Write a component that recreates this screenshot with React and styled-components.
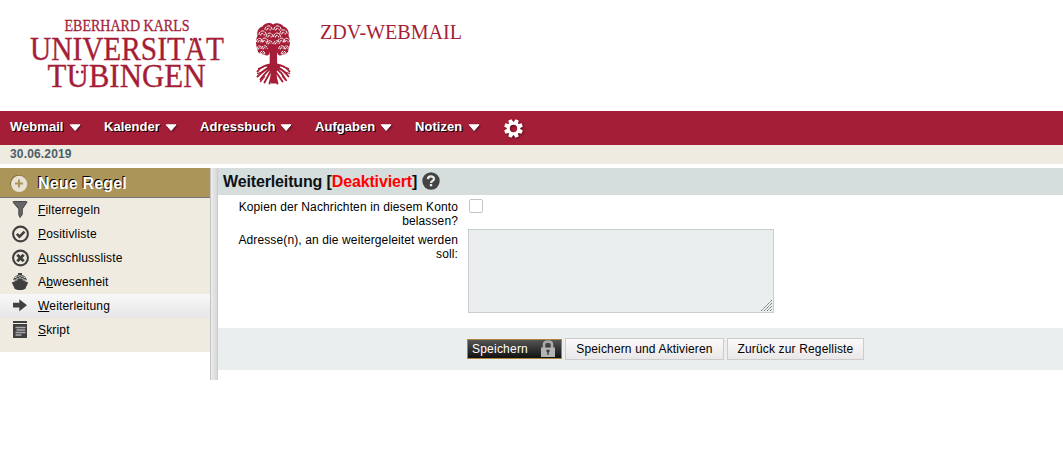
import React from 'react';
import styled, { createGlobalStyle, css } from 'styled-components';

const Global = createGlobalStyle`
  * { box-sizing: border-box; }
  body { margin: 0; background: #fff; color: #000; font: 12px/14px "Liberation Sans", Arial, sans-serif; overflow: hidden; }
`;
const RED = '#a51e37';

const Page = styled.div`display: flex; flex-direction: column; height: 462px;`;
const Banner = styled.header`height: 111px; flex: none; display: flex;`;
const LogoSvg = styled.svg`display: block; fill: ${RED}; font-family: "Liberation Serif", serif;`;

const Nav = styled.nav`height: 34px; flex: none; background: ${RED}; display: flex; padding-left: 10px;`;
const NavItem = styled.div`
  width: ${p => p.$w}px; height: 32px; display: flex; align-items: center; justify-content: space-between; padding-right: 23px;
  color: #fff; font-size: 13px; font-weight: bold; text-shadow: 1px 1px 0 #000; white-space: nowrap; letter-spacing: .04px;
`;
const Icon = styled.svg`display: block; flex: none; overflow: visible; ${p => p.$shadow && css`filter: drop-shadow(1px 1px 1px rgba(0,0,0,.5));`}`;
const GearSlot = styled.div`padding: 8px 0 0 1px;`;
const DateBar = styled.div`height: 19px; flex: none; margin-bottom: 4px; padding: 2px 10px; background: #f0ebe0; color: #4a5f6b; font-weight: bold; letter-spacing: .16px;`;

const Columns = styled.div`display: flex; height: 212px;`;
const Sidebar = styled.aside`width: 210px; height: 184px; flex: none; background: #f0ebe0;`;
const NewRule = styled.div`
  height: 30px; display: flex; align-items: center; padding: 2px 0 0 10px; gap: 10px; background: #ac9558; border-bottom: 1px solid #777;
  color: #fff; font-size: 16px; font-weight: bold; text-shadow: -1px -1px 0 #000; letter-spacing: .18px;
`;
const SideItem = styled.div`
  height: 24px; display: flex; align-items: center; padding-left: 10px; gap: 8px; letter-spacing: .17px;
  background: ${p => (p.$active ? 'linear-gradient(#f8f8f8, #e6e6e6)' : 'none')};
`;
const Splitter = styled.div`width: 8px; flex: none; background: linear-gradient(90deg, #ececec, #d8d8d8); border-left: 1px solid #c4c4c4; border-right: 1px solid #ccc;`;
const Main = styled.main`flex: 1; display: flex; flex-direction: column;`;
const Title = styled.h1`
  margin: 0; height: 27px; padding-left: 5px; display: flex; align-items: center; background: #d6dddd; color: #0c1216;
  font-size: 16px; font-weight: bold; white-space: pre; letter-spacing: -.14px;
`;
const Disabled = styled.span`color: #f00;`;
const HelpSlot = styled.span`margin: -2px 0 0 5px;`;
const Form = styled.div`height: 133px; display: grid; grid-template-columns: 240px 1fr; grid-template-rows: 34px 1fr; column-gap: 10px;`;
const Label = styled.label`padding: ${p => p.$top}px 0 0 10px; text-align: right; letter-spacing: .12px;`;
const Check = styled.span`display: block; width: 14px; height: 14px; margin: 4px 0 0 1px; border: 1px solid #c4c4c4; border-radius: 2px; background: #fff;`;
const Area = styled.div`width: 306px; height: 84px; border: 1px solid #c9cece; background: #eaeeee; display: flex; justify-content: flex-end; align-items: flex-end; padding: 0 1px 1px 0;`;
const Footer = styled.div`height: 42px; display: flex; padding: 10px 0 0 249px; gap: 3px; background: #eaeeee;`;
const Button = styled.button`
  height: 22px; width: ${p => p.$w}px; margin: 0; padding: 0; border: 1px solid #ccc; background: linear-gradient(#fbf9f9, #e9e7e7);
  color: #000; font: 12px/20px "Liberation Sans", Arial, sans-serif; letter-spacing: .15px; white-space: nowrap;
`;
const Primary = styled(Button)`
  height: 20px; margin-top: 1px; padding: 0 5px 1px 4px; display: flex; align-items: center; justify-content: space-between;
  border-color: #ac8640; background: linear-gradient(#555, #111); color: #fff; letter-spacing: .22px;
`;

const curls = [
  [7, 11, 3.6], [13, 6, 3.6], [22, 6, 3.6], [28, 10, 3.6], [31, 18, 3.2], [4, 18, 3], [14, 13, 3.4], [21.5, 13, 3.4],
  [9, 18, 3.4], [14, 20, 2.8], [21, 20, 2.8], [26, 18, 3.4], [31, 25, 2.6], [4, 25, 2.6], [9, 25, 2.8], [26, 25, 2.8], [7, 30, 2.4], [28, 30, 2.4],
];
const Tree = () => (
  <g transform="translate(255.5 22.5)" fill="none" stroke={RED} strokeLinecap="round">
    <path fill={RED} stroke="none" d="M17.5 2C14-.5 9 .5 7 4 3 5 1 9 2 13 0 17 0 23 2 27c0 4 4 5 7 5 2 2 4 1 5-1l1-4h6l1 4c1 2 3 3 5 1 4 0 6-2 6-6 2-4 2-9 0-13C34 9 32 5 28 4 25 0 20 0 17.5 2z" />
    <g stroke="#fff" strokeWidth="1">
      {curls.map(([x, y, r], i) => (
        <path key={i} strokeDasharray="2.6 1.5" d={`M${x - r} ${y + 1}a${r} ${r} 0 0 1 ${2 * r} 0M${x - r / 2} ${y + 1.6}a${r / 2} ${r / 2} 0 0 1 ${r} 0`} />
      ))}
    </g>
    <path fill={RED} stroke="none" d="M14.2 25h7.4v16l3.4 3-4 5 .5 12h-6l-.5-12-4-5 3.2-3z" />
    <path strokeWidth="1.9" d="M15 42C10 43 5 44 2 49M14 45C9 47 6 50 2 54M14 47c-4 3-6 6-9 10M15 49c-2 4-4 7-6 11M17 50l-3 11M21 42c5 1 10 2 13 7M22 45c5 2 8 5 11 9M22 47c4 3 6 6 8 10M20 49c3 4 5 7 7 10M19 50l3 11" />
    <path strokeWidth="1.3" d="M8 44.5 3 46M8 49l-6 2M28 44.5l5 1.5M28 49l6 2M9 54l-4 5M27 54l4 4" />
  </g>
);

const Logo = () => (
  <LogoSvg width="480" height="111">
    <defs>
      <clipPath id="lineTwo"><rect x="0" y="36.5" width="240" height="25" /></clipPath>
      <clipPath id="lineThree"><rect x="0" y="63.5" width="240" height="27" /></clipPath>
    </defs>
    <text x="64.5" y="31.3" fontSize="17" textLength="125" lengthAdjust="spacingAndGlyphs" stroke={RED} strokeWidth=".3">EBERHARD KARLS</text>
    <g clipPath="url(#lineTwo)" stroke={RED} strokeWidth=".35"><text x="30" y="59.5" fontSize="34" textLength="194" lengthAdjust="spacingAndGlyphs">UNIVERSITÄT</text></g>
    <circle cx="191.3" cy="39.3" r="1.4" /><circle cx="200" cy="39.3" r="1.4" />
    <g clipPath="url(#lineThree)" stroke={RED} strokeWidth=".35"><text x="47.5" y="86.5" fontSize="34" textLength="158" lengthAdjust="spacingAndGlyphs">TÜBINGEN</text></g>
    <circle cx="77.3" cy="72" r="1.4" /><circle cx="82.3" cy="72" r="1.4" />
    <Tree />
    <text x="320" y="39" fontSize="20" textLength="142" lengthAdjust="spacingAndGlyphs">ZDV-WEBMAIL</text>
  </LogoSvg>
);

const Arrow = () => (
  <Icon $shadow width="12" height="8" viewBox="0 0 12 8"><path fill="#fff" stroke="#fff" strokeLinejoin="round" d="M1.2 1.8h9.8L6.1 7.5z" /></Icon>
);
const Gear = () => (
  <Icon $shadow width="19" height="19" viewBox="-9.5 -9.5 19 19">
    {Array.from({ length: 8 }, (_, i) => <path key={i} fill="#fff" d="M-2.4-5.5-1.7-9.4h3.4L2.4-5.5z" transform={`rotate(${i * 45 + 22.5})`} />)}
    <circle r="5.2" fill="none" stroke="#fff" strokeWidth="3" />
  </Icon>
);
const DARK = '#404040';
const icons = {
  filter: <path fill="#666" stroke={DARK} strokeWidth=".9" d="M3.3 1.5h13.4v1.2L12.3 9v5.5l-2.3 3L8.8 15V9L3.3 2.7z" />,
  ok: <g fill="none" stroke={DARK}><circle cx="10.5" cy="10" r="7.4" strokeWidth="2.1" /><path strokeWidth="2.6" d="m6.8 9.9 2.7 2.7 5-5" /></g>,
  no: <g fill="none" stroke={DARK}><circle cx="10.5" cy="10" r="7.4" strokeWidth="2.1" /><path strokeWidth="3" d="m7.3 6.8 6.4 6.4m0-6.4-6.4 6.4" /></g>,
  ship: <g fill={DARK}><path d="M8 1h4v2q4 1 5 5.5H3Q4 4 8 3z" /><path fill="none" stroke="#eee" strokeWidth=".9" strokeDasharray="2.5 .6" d="m3 8.7 7-3 7 3M4.8 5.8l5.2-2.3 5.2 2.3" /><path d="m1.8 10.5 8.2-3.3 8.2 3.3-3 6.5q-5.2 2.6-10.4 0z" /><path stroke="#fff" strokeWidth=".6" fill="none" d="M5.5 18.3q4.5 1.2 9 0" /></g>,
  arrow: <path fill={DARK} d="M3 6.7h6.3V3.2L17 9.2l-7.7 6v-3.7H3z" />,
  script: <g><path fill={DARK} d="M3 1h14v2H3zM3 4h14v14H3z" /><path stroke="#aaa" strokeWidth="1.3" d="M5.5 7.5h10M6.5 10h8.5M5.5 12.5h10M5.5 15h6" /></g>,
};
const items = [
  ['filter', '', 'F', 'ilterregeln'], ['ok', '', 'P', 'ositivliste'], ['no', '', 'A', 'usschlussliste'],
  ['ship', 'A', 'b', 'wesenheit'], ['arrow', '', 'W', 'eiterleitung'], ['script', '', 'S', 'kript'],
];

export default function App() {
  return (
    <Page>
      <Global />
      <Banner><Logo /></Banner>
      <Nav>
        {[['Webmail', 94], ['Kalender', 96], ['Adressbuch', 115], ['Aufgaben', 100], ['Notizen', 88]].map(([t, w]) => (
          <NavItem key={t} $w={w}>{t}<Arrow /></NavItem>
        ))}
        <GearSlot><Gear /></GearSlot>
      </Nav>
      <DateBar>30.06.2019</DateBar>
      <Columns>
        <Sidebar>
          <NewRule>
            <Icon width="18" height="18" viewBox="0 0 18 18">
              <circle cx="8.5" cy="8.2" r="8.3" fill="#7d6c40" /><circle cx="9.1" cy="8.9" r="8.1" fill="#e8e2d3" />
              <path stroke="#ac9558" strokeWidth="2" d="M5 8.6h8M9 4.6v8" />
            </Icon>
            <span>Neue Regel</span>
          </NewRule>
          {items.map(([icon, pre, key, rest]) => (
            <SideItem key={icon} $active={icon === 'arrow'}>
              <Icon width="20" height="20" viewBox="0 0 20 20">{icons[icon]}</Icon>
              <span>{pre}<u>{key}</u>{rest}</span>
            </SideItem>
          ))}
        </Sidebar>
        <Splitter />
        <Main>
          <Title>
            Weiterleitung [<Disabled>Deaktiviert</Disabled>]
            <HelpSlot>
              <Icon width="18" height="18" viewBox="0 0 18 18">
                <circle cx="9" cy="9" r="8.7" fill="#444" />
                <path fill="none" stroke="#e8e8e8" strokeWidth="2.3" d="M5.9 7.1C6 3.6 12 3.6 12 6.9c0 2-3 2-3 4.1" /><path fill="#e8e8e8" d="M7.8 12h2.4v2.3H7.8z" />
              </Icon>
            </HelpSlot>
          </Title>
          <Form>
            <Label $top={5}>Kopien der Nachrichten in diesem Konto belassen?</Label>
            <Check />
            <Label $top={4}>Adresse(n), an die weitergeleitet werden soll:</Label>
            <Area>
              <Icon width="11" height="11" viewBox="0 0 11 11"><path stroke="#777" strokeWidth="1" strokeDasharray="1.6 .4" d="M0 11 11 0M3 11l8-8M6 11l5-5M9 11l2-2" /></Icon>
            </Area>
          </Form>
          <Footer>
            <Primary $w={95}>
              Speichern
              <Icon width="16" height="18" viewBox="0 0 16 18">
                <path fill="none" stroke="#aaa" strokeWidth="2.6" d="M4 8V4.5Q4 1.5 8 1.5t4 3V8" /><path fill="#b4b4b4" d="M1 7.5h14V17H1z" /><path fill="#333" d="M6.5 9.7h3v2.1h-.8v3H7.3v-3h-.8z" />
              </Icon>
            </Primary>
            <Button $w={159}>Speichern und Aktivieren</Button>
            <Button $w={137}>Zurück zur Regelliste</Button>
          </Footer>
        </Main>
      </Columns>
    </Page>
  );
}
